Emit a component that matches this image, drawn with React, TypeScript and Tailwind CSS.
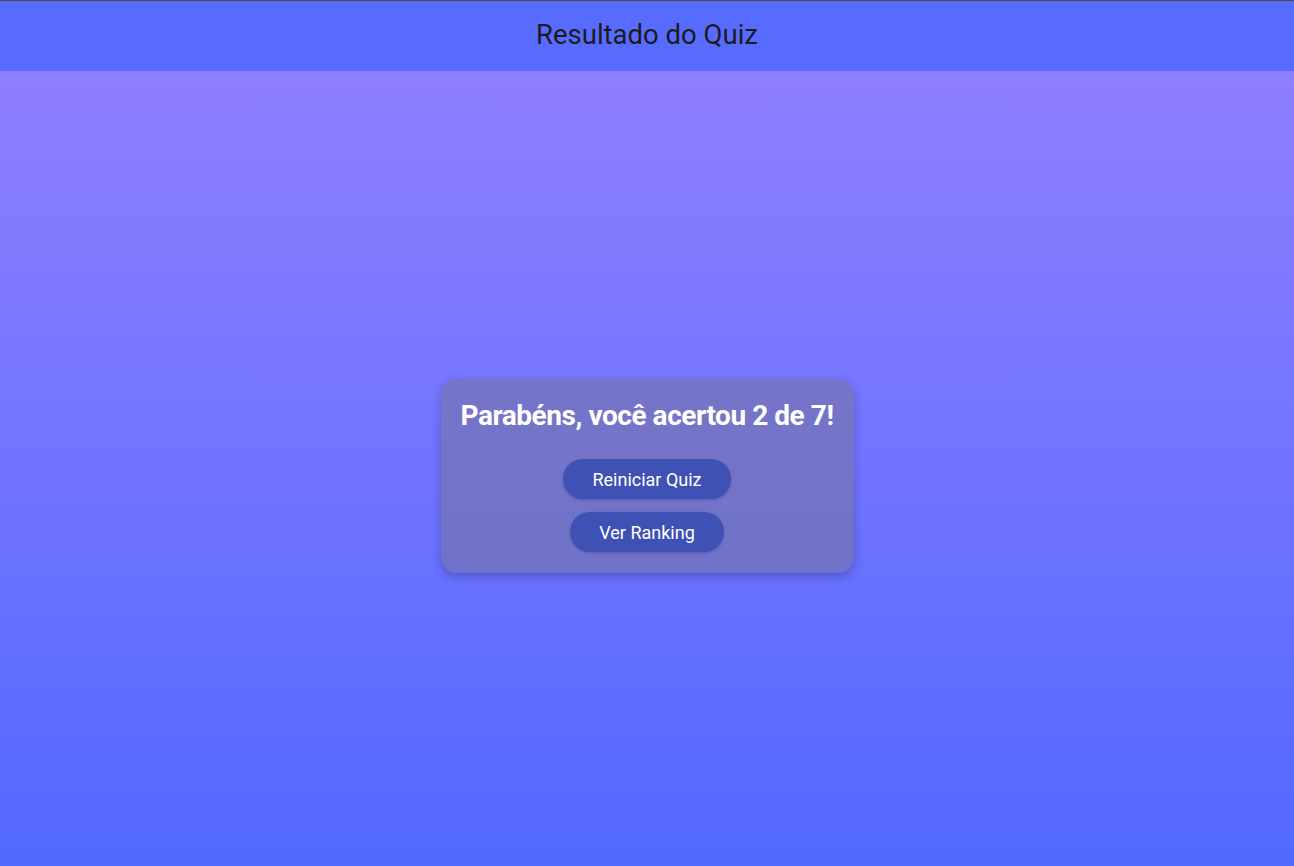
import React from 'react';

const App: React.FC = () => {
  return (
    <div
      className="flex min-h-[866px] flex-col border-t border-[#4a4a4a] bg-gradient-to-b from-[#9380ff] to-[#5268ff]"
      style={{ fontFamily: 'Roboto, "Noto Sans", sans-serif' }}
    >
      <header className="flex h-[70px] items-center justify-center bg-[#576cff] pb-[2px]">
        <h1 className="text-[27.5px] font-normal text-[#1d1b20]">Resultado do Quiz</h1>
      </header>
      <main className="flex flex-1 items-center justify-center pt-[15px]">
        <div className="flex w-[413px] flex-col items-center rounded-2xl bg-[rgba(118,116,162,0.58)] px-4 pb-[21px] pt-[19px] shadow-[0_4px_10px_rgba(40,40,120,0.35)]">
          <h2 className="text-[28px] font-bold leading-[36px] tracking-[-0.45px] text-white">
            Parabéns, você acertou 2 de 7!
          </h2>
          <button className="mt-[25px] h-10 rounded-full bg-[#3f51b5] px-[29px] text-[18px] text-white shadow-[0_1px_3px_rgba(0,0,0,0.2)]">
            Reiniciar Quiz
          </button>
          <button className="mt-[13px] h-10 rounded-full bg-[#3f51b5] px-[29px] text-[18px] text-white shadow-[0_1px_3px_rgba(0,0,0,0.2)]">
            Ver Ranking
          </button>
        </div>
      </main>
    </div>
  );
};

export default App;
